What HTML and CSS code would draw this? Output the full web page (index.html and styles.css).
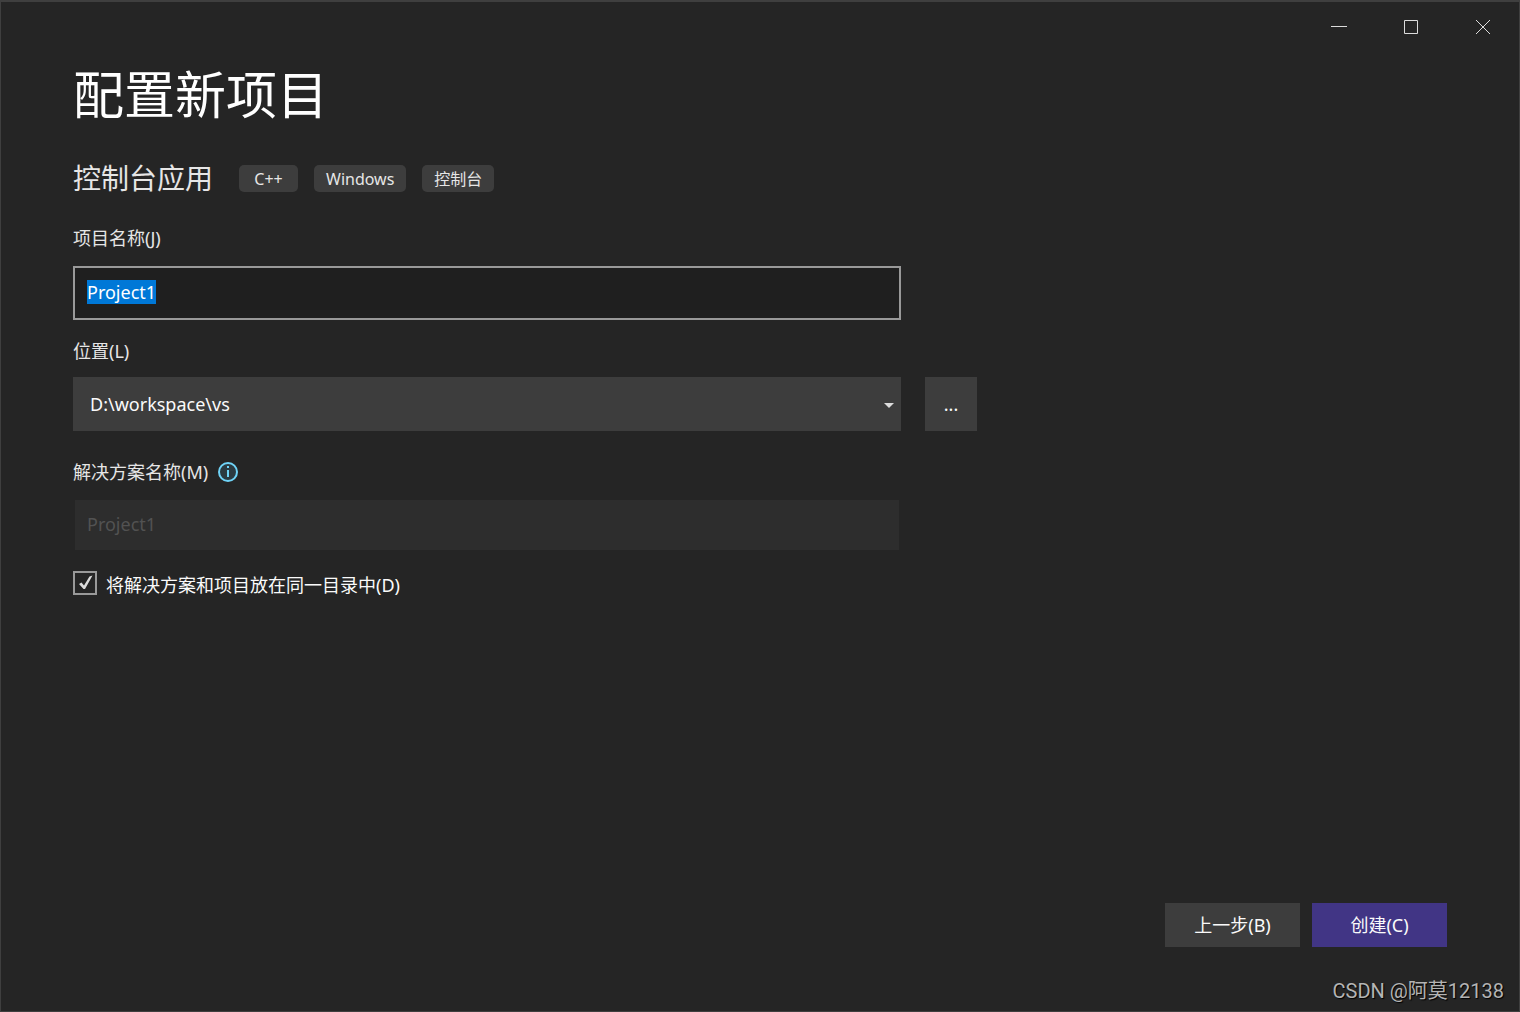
FILE: index.html
```html
<!DOCTYPE html>
<html lang="zh-CN">
<head>
  <meta charset="UTF-8" />
  <meta name="viewport" content="width=device-width, initial-scale=1.0" />
  <title>配置新项目</title>
  <link rel="stylesheet" href="styles.css">
</head>
<body>
  <div class="window">
    <header class="titlebar">
      <button type="button" class="caption-btn" aria-label="最小化">
        <svg width="16" height="16" viewBox="0 0 16 16"><path d="M0 7.500h16" /></svg>
      </button>
      <button type="button" class="caption-btn" aria-label="最大化">
        <svg width="16" height="16" viewBox="0 0 16 16"><path d="M1.500 1.500h13v13h-13z" /></svg>
      </button>
      <button type="button" class="caption-btn" aria-label="关闭">
        <svg width="16" height="16" viewBox="0 0 16 16"><path d="M1 1l14 14M15 1L1 15" /></svg>
      </button>
    </header>

    <form class="content" id="project-form">
      <h1>配置新项目</h1>

      <div class="template">
        <h2>控制台应用</h2>
        <ul class="tags">
          <li>C++</li>
          <li>Windows</li>
          <li>控制台</li>
        </ul>
      </div>

      <div class="field">
        <label for="projectName">项目名称(J)</label>
        <input type="text" id="projectName" class="text-box" value="Project1" autocomplete="off" spellcheck="false" autofocus />
      </div>

      <div class="field field-location">
        <label for="location">位置(L)</label>
        <div class="location-row">
          <div class="select-wrap">
            <select id="location">
              <option>D:\workspace\vs</option>
            </select>
          </div>
          <button type="button" class="btn browse">...</button>
        </div>
      </div>

      <div class="field field-solution">
        <div class="label-row">
          <label for="solutionName">解决方案名称(M)</label>
          <svg class="info" width="20" height="20" viewBox="0 0 20 20" aria-hidden="true">
            <circle cx="10" cy="10" r="9" />
            <path d="M9 4h2v2H9zM9 8h2v7H9z" />
          </svg>
        </div>
        <input type="text" id="solutionName" class="text-box" value="Project1" disabled />
      </div>

      <div class="check-row">
        <span class="check">
          <input type="checkbox" id="sameDir" checked />
          <svg width="24" height="24" viewBox="0 0 24 24" aria-hidden="true"><path d="M6 13l2.500-1.500L11 14.500 16.500 5.500l3-1L12 18h-1.500z" /></svg>
        </span>
        <label for="sameDir">将解决方案和项目放在同一目录中(D)</label>
      </div>

      <div class="actions">
        <button type="button" class="btn">上一步(B)</button>
        <button type="submit" class="btn btn-primary">创建(C)</button>
      </div>
    </form>

    <div class="watermark">CSDN @阿莫12138</div>
  </div>

  <script>
    const nameBox = document.getElementById("projectName");
    const solutionBox = document.getElementById("solutionName");

    nameBox.focus();
    nameBox.select();

    // the solution takes the project's name while both share a directory
    nameBox.addEventListener("input", function () {
      if (document.getElementById("sameDir").checked) {
        solutionBox.value = nameBox.value;
      }
    });

    document.getElementById("sameDir").addEventListener("change", function (e) {
      solutionBox.disabled = e.target.checked;
    });

    document.getElementById("project-form").addEventListener("submit", function (e) {
      e.preventDefault();
    });
  </script>
</body>
</html>
```

FILE: styles.css
```css
* {
  box-sizing: border-box;
}

body {
  margin: 0;
  font-family: 'Noto Sans', 'Noto Sans CJK SC', sans-serif;
  font-size: 18px;
  line-height: 24px;
  background-color: #252525;
  color: #e6e6e6;
}

button,
input,
select {
  font: inherit;
  color: #fafafa;
  border: none;
  border-radius: 0;
}

.window {
  position: relative;
  display: flex;
  flex-direction: column;
  min-height: 100vh;
  border: 1px solid #3f3f3f;
  border-top-width: 2px;
}

.titlebar {
  display: flex;
  justify-content: flex-end;
}

.caption-btn {
  display: flex;
  align-items: center;
  justify-content: center;
  width: 72px;
  height: 50px;
  padding: 0;
  background: none;
}

.caption-btn svg {
  fill: none;
  stroke: #dcdcdc;
}

.caption-btn:hover {
  background-color: #3d3d3d;
}

.content {
  flex: 1;
  display: flex;
  flex-direction: column;
  padding: 10px 72px 64px;
}

h1 {
  margin: 0;
  font-size: 51px;
  font-weight: 400;
  line-height: 64px;
  color: #ffffff;
}

.template {
  display: flex;
  align-items: center;
  gap: 26px;
  margin: 34px 0 30px;
}

h2 {
  margin: 0;
  font-size: 28px;
  font-weight: 400;
  line-height: 36px;
}

.tags {
  display: flex;
  gap: 16px;
  margin: 0;
  padding: 0;
  list-style: none;
}

.tags li {
  min-width: 59px;
  padding: 2px 12px 1px;
  font-size: 16px;
  text-align: center;
  background-color: #3d3d3d;
  border-radius: 5px;
}

.field {
  display: flex;
  flex-direction: column;
  gap: 16px;
}

.field-location {
  gap: 14px;
  margin: 19px 0 29px;
}

.field-solution {
  gap: 14px;
}

.text-box,
.select-wrap {
  width: 100%;
  max-width: 828px;
}

.text-box {
  height: 54px;
  padding: 0 12px 2px;
  background-color: #1f1f1f;
  border: 2px solid #999999;
  outline: none;
}

.text-box::selection {
  background-color: #0078d7;
  color: #ffffff;
}

.text-box:disabled {
  color: #525252;
  background-color: #2d2d2d;
  background-clip: padding-box;
  border-color: transparent;
}

.location-row {
  display: flex;
  gap: 24px;
}

.select-wrap {
  position: relative;
}

.select-wrap::after {
  content: "";
  position: absolute;
  top: 26px;
  right: 7px;
  border: 5px solid transparent;
  border-top-color: #dcdcdc;
  border-bottom: none;
  pointer-events: none;
}

select {
  appearance: none;
  width: 100%;
  height: 54px;
  padding: 0 17px;
  background-color: #3d3d3d;
  outline: none;
}

.btn {
  width: 135px;
  height: 44px;
  padding: 0;
  background-color: #3d3d3d;
}

.btn:hover {
  background-color: #4a4a4a;
}

.browse {
  flex: none;
  width: 52px;
  height: 54px;
}

.btn-primary {
  background-color: #413585;
}

.btn-primary:hover {
  background-color: #4f42a0;
}

.label-row {
  display: flex;
  align-items: center;
  gap: 10px;
}

.info circle {
  fill: #2b3a41;
  stroke: #6fd3f7;
  stroke-width: 2;
}

.info path {
  fill: #6fd3f7;
}

.check-row {
  display: flex;
  align-items: flex-start;
  gap: 9px;
  margin-top: 19px;
  color: #fafafa;
}

.check-row label {
  padding-top: 2px;
}

.check {
  position: relative;
  display: flex;
}

.check input {
  appearance: none;
  width: 24px;
  height: 24px;
  margin: 0;
  border: 2px solid #999999;
}

.check svg {
  position: absolute;
  top: 0;
  left: 0;
  fill: #dcdcdc;
  pointer-events: none;
}

.check input:not(:checked) + svg {
  display: none;
}

.actions {
  display: flex;
  justify-content: flex-end;
  gap: 12px;
  margin-top: auto;
}

.watermark {
  position: absolute;
  right: 15px;
  bottom: 8px;
  font-family: Roboto, 'Noto Sans CJK SC', sans-serif;
  font-size: 20px;
  color: #b4b4b4;
  text-shadow: 1px 1px 1px #000000;
}
```
